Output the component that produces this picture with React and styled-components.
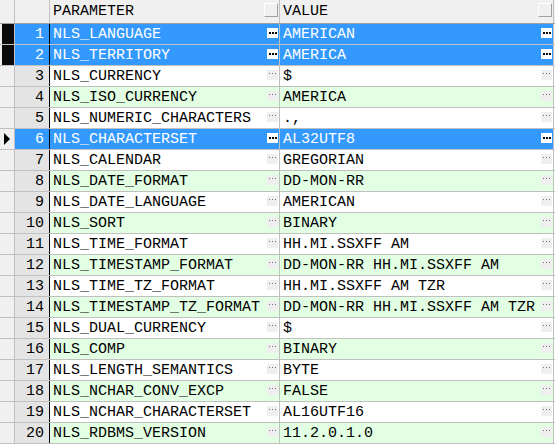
import React from "react";
import styled, { createGlobalStyle, css } from "styled-components";

const Global = createGlobalStyle`
  html, body { margin: 0; padding: 0; background: #ffffff; }
  body { font-family: "Liberation Mono", "DejaVu Sans Mono", monospace; }
`;

const LINE = "#c0c0c0";
const BLUE = "#3399ff";
const GREEN = "#e3ffe3";

const Grid = styled.div`
  width: 558px;
  height: 444px;
  background: #ffffff;
  font-family: "Liberation Mono", monospace;
  font-size: 15px;
  color: #000000;
  overflow: hidden;
`;

const HeaderRow = styled.div`
  display: flex;
  height: 23px;
  border-bottom: 1px solid #a0a0a0;
  background: #f0f0f0;
  width: 555px;
`;

const Row = styled.div`
  display: flex;
  height: 20px;
  border-bottom: 1px solid ${LINE};
  width: 555px;
`;

const Indicator = styled.div`
  width: 15px;
  flex: none;
  box-sizing: border-box;
  border-right: 1px solid ${LINE};
  background: #f0f0f0;
  display: flex;
  align-items: stretch;
  padding-left: 2px;
  ${(p) =>
    p.$marked &&
    css`
      background: #f0f0f0;
    `}
`;

const MarkBox = styled.div`
  flex: 1;
  background: ${(p) => (p.$on ? "#0a0a0a" : "transparent")};
  display: flex;
  align-items: center;
  padding-left: 2px;
`;

const NumCell = styled.div`
  width: 35px;
  flex: none;
  box-sizing: border-box;
  border-right: 1px solid ${(p) => (p.$header ? LINE : "#000000")};
  background: ${(p) => (p.$sel ? BLUE : p.$header ? "#f0f0f0" : "#e4e4e4")};
  color: ${(p) => (p.$sel ? "#ffffff" : "#000000")};
  text-align: right;
  padding-right: 5px;
  line-height: 21px;
`;

const Cell = styled.div`
  width: ${(p) => p.$w}px;
  flex: none;
  box-sizing: border-box;
  border-right: 1px solid ${LINE};
  position: relative;
  padding-left: 3px;
  line-height: 21px;
  white-space: nowrap;
  background: ${(p) => (p.$sel ? BLUE : p.$alt ? GREEN : "#ffffff")};
  color: ${(p) => (p.$sel ? "#ffffff" : "#000000")};
`;

const HeadCell = styled.div`
  width: ${(p) => p.$w}px;
  flex: none;
  box-sizing: border-box;
  border-right: 1px solid ${LINE};
  position: relative;
  padding-left: 3px;
  line-height: 24px;
  color: #000000;
`;

const HeadBox = styled.div`
  position: absolute;
  right: 1px;
  top: 3px;
  width: 12px;
  height: 12px;
  background: #f0f0f0;
  border-top: 1px solid #ffffff;
  border-left: 1px solid #ffffff;
  border-right: 1px solid #a0a0a0;
  border-bottom: 1px solid #a0a0a0;
`;

const Ellipsis = styled.div`
  position: absolute;
  right: 1px;
  top: 4px;
  width: 11px;
  height: 10px;
  background: ${(p) => (p.$sel ? "#ffffff" : "#efefef")};
  display: flex;
  align-items: center;
  justify-content: center;
`;

const Dots = ({ sel }) => (
  <svg width="11" height="10" viewBox="0 0 11 10">
    {[2, 5, 8].map((x) => (
      <rect
        key={x}
        x={x}
        y={sel ? 4 : 3}
        width={sel ? 2 : 1}
        height={sel ? 2 : 1}
        fill={sel ? "#000000" : "#707070"}
      />
    ))}
  </svg>
);

const Arrow = () => (
  <svg width="6" height="12" viewBox="0 0 6 12">
    <path d="M0 0 L6 6 L0 12 Z" fill="#000000" />
  </svg>
);

const data = [
  ["NLS_LANGUAGE", "AMERICAN"],
  ["NLS_TERRITORY", "AMERICA"],
  ["NLS_CURRENCY", "$"],
  ["NLS_ISO_CURRENCY", "AMERICA"],
  ["NLS_NUMERIC_CHARACTERS", ".,"],
  ["NLS_CHARACTERSET", "AL32UTF8"],
  ["NLS_CALENDAR", "GREGORIAN"],
  ["NLS_DATE_FORMAT", "DD-MON-RR"],
  ["NLS_DATE_LANGUAGE", "AMERICAN"],
  ["NLS_SORT", "BINARY"],
  ["NLS_TIME_FORMAT", "HH.MI.SSXFF AM"],
  ["NLS_TIMESTAMP_FORMAT", "DD-MON-RR HH.MI.SSXFF AM"],
  ["NLS_TIME_TZ_FORMAT", "HH.MI.SSXFF AM TZR"],
  ["NLS_TIMESTAMP_TZ_FORMAT", "DD-MON-RR HH.MI.SSXFF AM TZR"],
  ["NLS_DUAL_CURRENCY", "$"],
  ["NLS_COMP", "BINARY"],
  ["NLS_LENGTH_SEMANTICS", "BYTE"],
  ["NLS_NCHAR_CONV_EXCP", "FALSE"],
  ["NLS_NCHAR_CHARACTERSET", "AL16UTF16"],
  ["NLS_RDBMS_VERSION", "11.2.0.1.0"],
];

const selected = new Set([1, 2, 6]);
const marked = new Set([1, 2]);
const current = 6;

export default function App() {
  return (
    <>
      <Global />
      <Grid>
        <HeaderRow>
          <Indicator />
          <NumCell $header />
          <HeadCell $w={230}>
            PARAMETER
            <HeadBox />
          </HeadCell>
          <HeadCell $w={274}>
            VALUE
            <HeadBox />
          </HeadCell>
        </HeaderRow>
        {data.map(([p, v], i) => {
          const n = i + 1;
          const sel = selected.has(n);
          const alt = n % 2 === 0;
          return (
            <Row key={n}>
              <Indicator>
                <MarkBox $on={marked.has(n)}>{n === current && <Arrow />}</MarkBox>
              </Indicator>
              <NumCell $sel={sel}>{n}</NumCell>
              <Cell $w={230} $sel={sel} $alt={alt}>
                {p}
                <Ellipsis $sel={sel}>
                  <Dots sel={sel} />
                </Ellipsis>
              </Cell>
              <Cell $w={274} $sel={sel} $alt={alt}>
                {v}
                <Ellipsis $sel={sel}>
                  <Dots sel={sel} />
                </Ellipsis>
              </Cell>
            </Row>
          );
        })}
      </Grid>
    </>
  );
}
